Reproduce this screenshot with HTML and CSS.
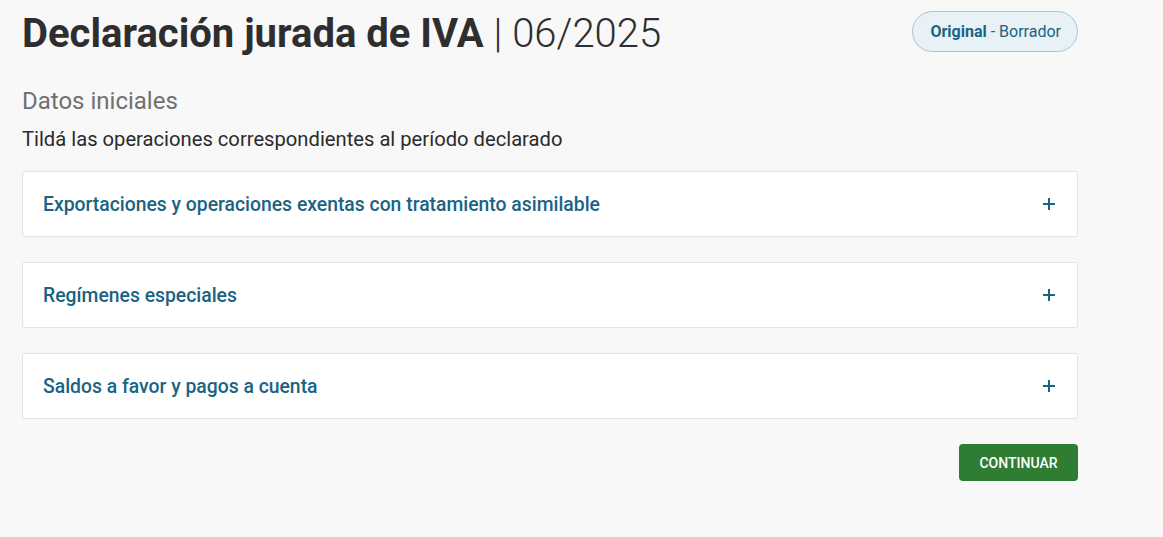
FILE: index.html
```html
<!DOCTYPE html>
<html lang="es">
<head>
<meta charset="utf-8">
<title>Declaración jurada de IVA</title>
<link rel="stylesheet" href="styles.css">
</head>
<body>
<main class="page">
  <header class="header">
    <h1 class="title">Declaración jurada de IVA <span class="period">| 06/2025</span></h1>
    <span class="badge"><strong>Original</strong> - Borrador</span>
  </header>
  <h2 class="subtitle">Datos iniciales</h2>
  <p class="lead">Tildá las operaciones correspondientes al período declarado</p>
  <section class="cards">
    <div class="card">
      <span class="card-title">Exportaciones y operaciones exentas con tratamiento asimilable</span>
      <svg class="plus" width="14" height="14" viewBox="0 0 14 14"><path d="M7 1v12M1 7h12" stroke="#1a6382" stroke-width="2"/></svg>
    </div>
    <div class="card">
      <span class="card-title">Regímenes especiales</span>
      <svg class="plus" width="14" height="14" viewBox="0 0 14 14"><path d="M7 1v12M1 7h12" stroke="#1a6382" stroke-width="2"/></svg>
    </div>
    <div class="card">
      <span class="card-title">Saldos a favor y pagos a cuenta</span>
      <svg class="plus" width="14" height="14" viewBox="0 0 14 14"><path d="M7 1v12M1 7h12" stroke="#1a6382" stroke-width="2"/></svg>
    </div>
  </section>
  <div class="actions">
    <button class="btn">CONTINUAR</button>
  </div>
</main>
</body>
</html>
```

FILE: styles.css
```css
html, body {
  margin: 0;
  padding: 0;
  background: #f8f8f8;
}
body {
  font-family: Roboto, "Liberation Sans", sans-serif;
  color: #333;
}
.page {
  width: 1056px;
  padding: 0 0 0 22px;
}
.header {
  display: flex;
  justify-content: space-between;
  align-items: flex-start;
  padding-top: 10px;
}
.title {
  margin: 0;
  font-size: 40px;
  line-height: 48px;
  font-weight: 700;
  color: #2e2e2e;
}
.period {
  font-weight: 300;
}
.badge {
  margin-top: 1px;
  display: inline-flex;
  align-items: center;
  height: 39px;
  padding: 0 16px 0 17px;
  border: 1px solid #a8c6d1;
  border-radius: 21px;
  background: #e8f1f5;
  color: #1a6382;
  font-size: 16px;
}
.badge strong {
  font-weight: 700;
  margin-right: 4px;
}
.subtitle {
  margin: 28px 0 0;
  font-size: 24px;
  line-height: 30px;
  font-weight: 400;
  color: #707070;
}
.lead {
  margin: 10px 0 0;
  font-size: 20.2px;
  line-height: 26px;
  color: #2b2b2b;
}
.cards {
  margin-top: 19px;
  display: flex;
  flex-direction: column;
  gap: 25px;
}
.card {
  display: flex;
  align-items: center;
  justify-content: space-between;
  height: 64px;
  padding: 0 21px 0 20px;
  background: #fff;
  border: 1px solid #e3e3e3;
  border-radius: 3px;
}
.card-title {
  font-size: 19.35px;
  font-weight: 500;
  color: #1a6382;
}
.actions {
  display: flex;
  justify-content: flex-end;
  margin-top: 25px;
}
.btn {
  width: 119px;
  height: 37px;
  border: none;
  border-radius: 4px;
  background: #2e7d32;
  color: #fff;
  font-family: Roboto, "Liberation Sans", sans-serif;
  font-size: 14px;
  font-weight: 500;
  letter-spacing: 0;
}
```
